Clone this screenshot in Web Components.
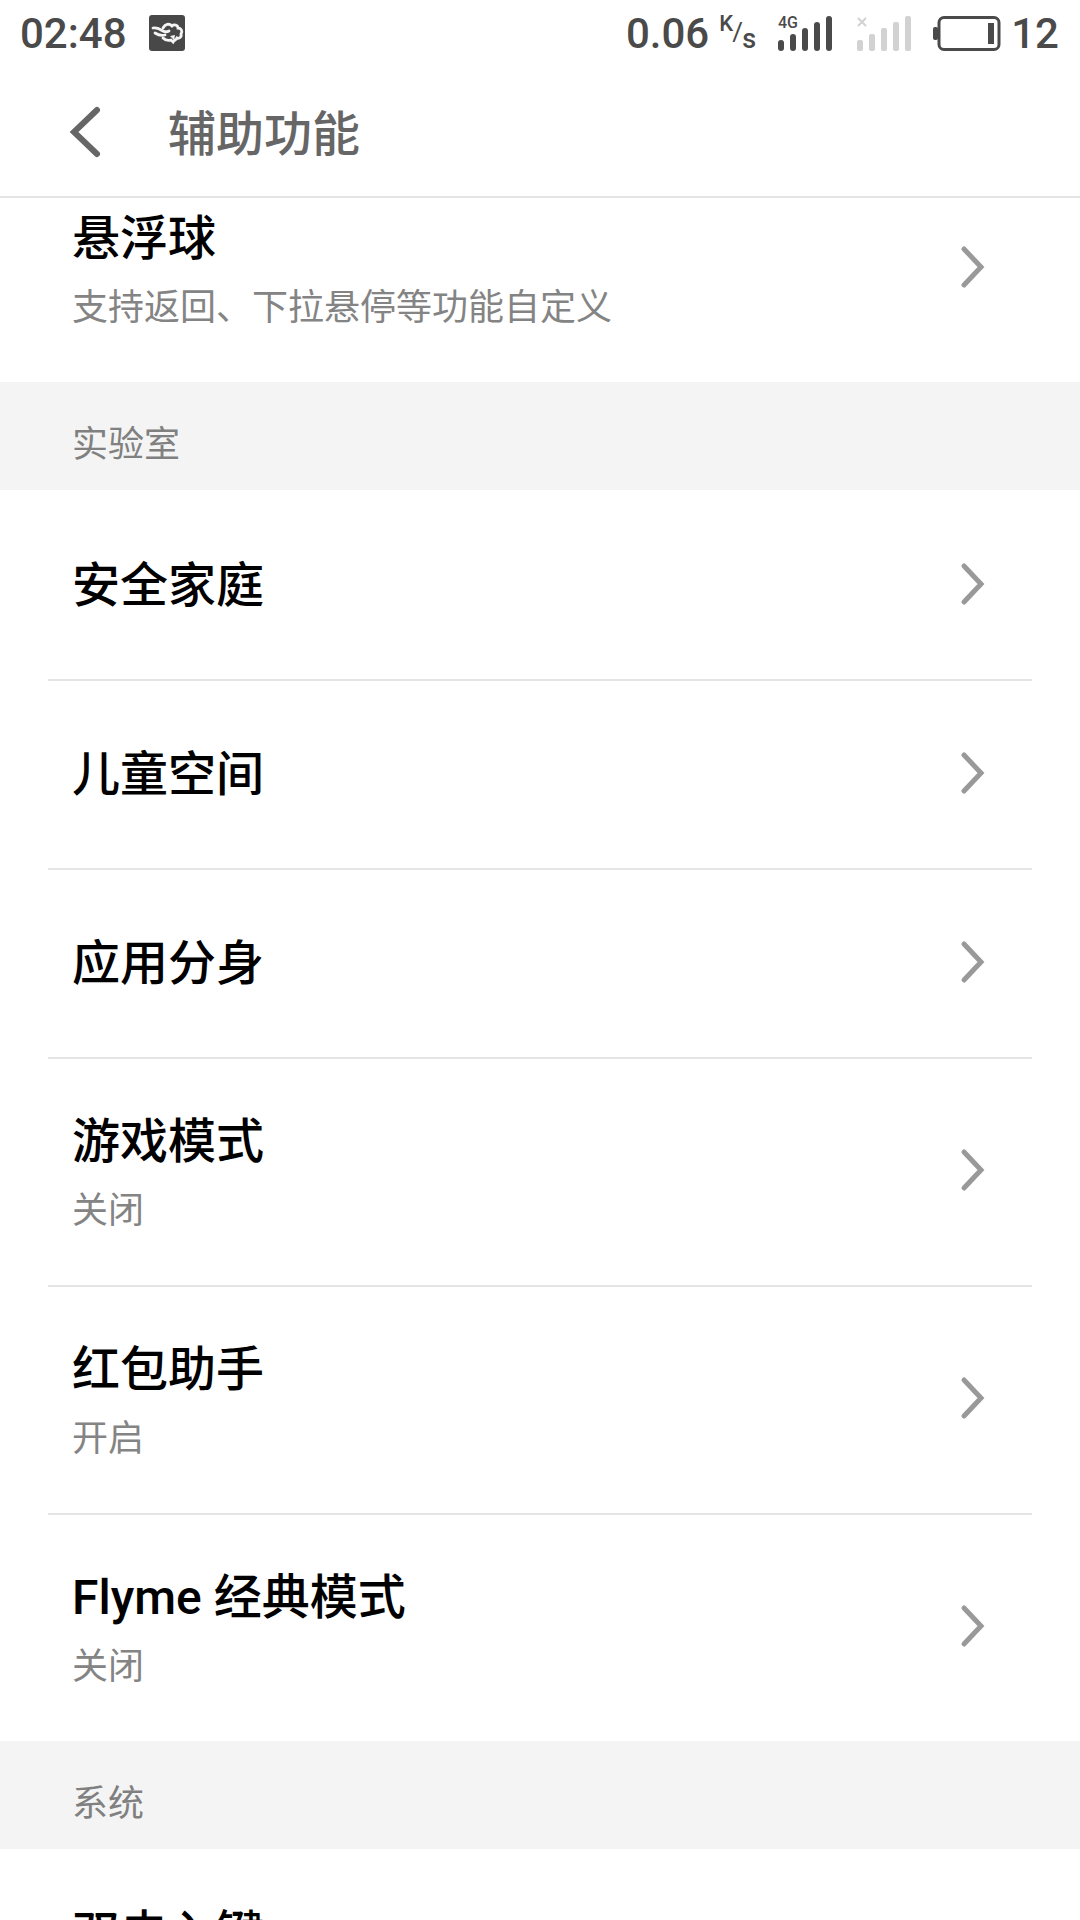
<!DOCTYPE html>
<html>
<head>
<meta charset="utf-8">
<style>
html, body { margin: 0; padding: 0; background: #fff; }
body { width: 1080px; height: 1920px; overflow: hidden; font-family: "Roboto", "Noto Sans CJK SC", sans-serif; }
</style>
</head>
<body>
<status-bar></status-bar>
<title-bar>辅助功能</title-bar>
<setting-list>
  <setting-row sub="支持返回、下拉悬停等功能自定义" last>悬浮球</setting-row>
  <section-head>实验室</section-head>
  <setting-row>安全家庭</setting-row>
  <setting-row>儿童空间</setting-row>
  <setting-row>应用分身</setting-row>
  <setting-row sub="关闭">游戏模式</setting-row>
  <setting-row sub="开启">红包助手</setting-row>
  <setting-row sub="关闭" last>Flyme 经典模式</setting-row>
  <section-head>系统</section-head>
  <setting-row sub="" last>双击入键</setting-row>
</setting-list>

<script>
const statusTemplate = document.createElement('template');
statusTemplate.innerHTML = `
<style>
:host{
    display: flex;
    align-items: center;
    height: 66px;
    padding: 0 21px 0 20px;
    color: #4a4a4a;
    font-family: Roboto, sans-serif;
    font-size: 42px;
    font-weight: 500;
    box-sizing: border-box;
}
svg{ overflow: visible; display: block; }
#app{ margin-left: 22px; }
#spacer{ flex: 1; }
#unit{ display: block; width: 36px; margin-left: 10px; height: 44px; position: relative; line-height: 1; }
#unit span{ position: absolute; }
#sig1{ margin-left: 23px; }
#sig2{ margin-left: 24px; }
#bat{ margin-left: 21px; }
#level{ margin-left: 10px; }
</style>
<span id="time">02:48</span>
<svg id="app" width="36" height="36" viewBox="0 0 36 36">
  <rect width="36" height="36" rx="3" fill="#484848"/>
  <g fill="none" stroke="#f4f4f4" stroke-width="2.8" stroke-linecap="round">
    <path d="M14 13c2-4 6-5 9-2 2-2 6-1 6 2 3 0 5 3 3 6 1 3-2 5-4 4-1 2-3 2-4 4l-2-2c-3 1-6 0-8-2"/>
    <path d="M4 13c4-1 7 1 10 3 2 1 4 1 6 0"/>
    <path d="M6 18c3 2 6 3 10 2"/>
  </g>
  <path d="M21 21l5-1-1 5z" fill="#f4f4f4"/>
</svg>
<span id="spacer"></span>
<span id="speed">0.06</span>
<span id="unit">
  <span style="left:0;top:2px;font-size:22px">K</span>
  <span style="left:13px;top:8px;font-size:26px;font-weight:400">/</span>
  <span style="left:23px;top:15px;font-size:27px">s</span>
</span>
<svg id="sig1" width="55" height="35" viewBox="0 0 55 35">
  <text x="0" y="12" font-family="Roboto" font-size="16" font-weight="500" fill="#4a4a4a">4G</text>
  <g fill="#4a4a4a">
    <rect x="0" y="24" width="6" height="11" rx="3"/>
    <rect x="12" y="18" width="6" height="17" rx="3"/>
    <rect x="24" y="12" width="6" height="23" rx="3"/>
    <rect x="36" y="6" width="6" height="29" rx="3"/>
    <rect x="48" y="0" width="6" height="35" rx="3"/>
  </g>
</svg>
<svg id="sig2" width="55" height="35" viewBox="0 0 55 35">
  <path d="M1 2l8 8M9 2l-8 8" stroke="#d2d2d2" stroke-width="2"/>
  <g fill="#d2d2d2">
    <rect x="0" y="24" width="6" height="11" rx="2"/>
    <rect x="12" y="18" width="6" height="17" rx="2"/>
    <rect x="24" y="12" width="6" height="23" rx="2"/>
    <rect x="36" y="6" width="6" height="29" rx="2"/>
    <rect x="48" y="0" width="6" height="35" rx="2"/>
  </g>
</svg>
<svg id="bat" width="68" height="35" viewBox="0 0 68 35">
  <rect x="0" y="11" width="5" height="13" rx="2" fill="#4a4a4a"/>
  <rect x="6" y="1.5" width="60" height="32" rx="5" fill="none" stroke="#4a4a4a" stroke-width="3"/>
  <rect x="55" y="7" width="6" height="21" fill="#4a4a4a"/>
</svg>
<span id="level">12</span>
`;

class StatusBar extends HTMLElement {
    constructor() {
        super();
        this.attachShadow({mode: 'open'});
        this.shadowRoot.appendChild(statusTemplate.content.cloneNode(true));
    }
}

const titleTemplate = document.createElement('template');
titleTemplate.innerHTML = `
<style>
:host{
    display: flex;
    align-items: center;
    height: 132px;
    box-sizing: border-box;
    border-bottom: 2px solid #e4e4e4;
    color: #666;
    font-family: "Noto Sans CJK SC", sans-serif;
    font-size: 48px;
    font-weight: 500;
}
svg{ margin-left: 68px; display: block; }
#label{ margin-left: 66px; padding-bottom: 2px; }
</style>
<svg width="34" height="54" viewBox="0 0 34 54">
  <path d="M29 6L6 28l23 22" fill="none" stroke="#666" stroke-width="6" stroke-linecap="round"/>
</svg>
<span id="label"><slot></slot></span>
`;

class TitleBar extends HTMLElement {
    constructor() {
        super();
        this.attachShadow({mode: 'open'});
        this.shadowRoot.appendChild(titleTemplate.content.cloneNode(true));
    }
}

const listTemplate = document.createElement('template');
listTemplate.innerHTML = `
<style>
/* list is scrolled: first row sits 44px under the title bar */
:host{ display: block; height: 1722px; overflow: hidden; }
#scroll{ margin-top: -44px; }
</style>
<div id="scroll"><slot></slot></div>
`;

class SettingList extends HTMLElement {
    constructor() {
        super();
        this.attachShadow({mode: 'open'});
        this.shadowRoot.appendChild(listTemplate.content.cloneNode(true));
    }
}

const headTemplate = document.createElement('template');
headTemplate.innerHTML = `
<style>
:host{
    display: flex;
    align-items: flex-end;
    height: 108px;
    box-sizing: border-box;
    padding: 0 0 23px 72px;
    background: #f4f4f4;
    color: #808080;
    font-family: "Noto Sans CJK SC", sans-serif;
    font-size: 36px;
    line-height: 52px;
}
</style>
<slot></slot>
`;

class SectionHead extends HTMLElement {
    constructor() {
        super();
        this.attachShadow({mode: 'open'});
        this.shadowRoot.appendChild(headTemplate.content.cloneNode(true));
    }
}

const rowTemplate = document.createElement('template');
rowTemplate.innerHTML = `
<style>
:host{
    display: block;
    padding: 0 48px;
    font-family: Roboto, "Noto Sans CJK SC", sans-serif;
}
#row{
    display: flex;
    align-items: center;
    justify-content: space-between;
    box-sizing: border-box;
    height: 189px;
    padding: 0 46px 0 24px;
    box-shadow: 0 2px 0 #e5e5e5;
}
:host([sub]) #row{ height: 228px; }
:host([last]) #row{ box-shadow: none; }
#text{ padding-top: 2px; }
#title{
    color: #000;
    font-size: 48px;
    font-weight: 500;
    line-height: 68px;
}
#sub{
    color: #848484;
    font-size: 36px;
    line-height: 50px;
    min-height: 50px;
    margin-top: 10px;
}
:host(:not([sub])) #sub{ display: none; }
svg{ display: block; flex: none; margin-bottom: 2px; }
</style>
<div id="row">
  <div id="text">
    <div id="title"><slot></slot></div>
    <div id="sub"></div>
  </div>
  <svg width="28" height="44" viewBox="0 0 28 44">
    <path d="M6 4l17 18L6 40" fill="none" stroke="#999" stroke-width="5" stroke-linecap="round"/>
  </svg>
</div>
`;

class SettingRow extends HTMLElement {
    constructor() {
        super();
        this.attachShadow({mode: 'open'});
        this.shadowRoot.appendChild(rowTemplate.content.cloneNode(true));
        this.shadowRoot.getElementById('sub').textContent = this.getAttribute('sub') || '';
    }
}

window.customElements.define('status-bar', StatusBar);
window.customElements.define('title-bar', TitleBar);
window.customElements.define('setting-list', SettingList);
window.customElements.define('section-head', SectionHead);
window.customElements.define('setting-row', SettingRow);
</script>
</body>
</html>
